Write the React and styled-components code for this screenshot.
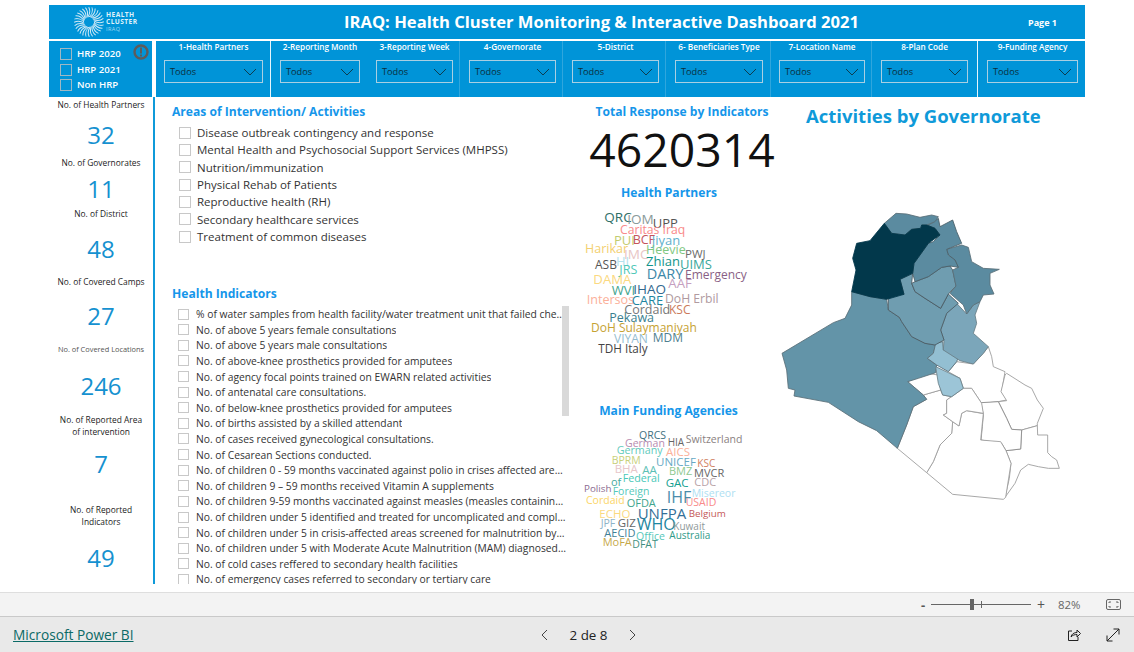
import React from "react";
import styled, { createGlobalStyle } from "styled-components";

const FONT = `"Open Sans", "Noto Sans", "Liberation Sans", sans-serif`;

const Global = createGlobalStyle`
  html, body { margin: 0; padding: 0; background: #fff; overflow: hidden; }
  body { font-family: ${FONT}; }
`;

const Page = styled.div`
  width: 1134px; height: 652px; display: flex; flex-direction: column; overflow: hidden; background: #fff;
`;
const Report = styled.main`
  height: 592px; box-sizing: border-box; padding: 5px 49px 0; display: flex; flex-direction: column; overflow: hidden;
`;
const Header = styled.header`
  height: 34px; flex: none; background: #0094d8; display: flex; align-items: center; position: relative; color: #fff;
`;
const LogoWrap = styled.div`
  width: 295px; flex: none; display: flex; align-items: center; padding-left: 25px; box-sizing: border-box; gap: 2px;
`;
const LogoText = styled.div`
  font-size: 6.6px; line-height: 7.4px; font-weight: 700; letter-spacing: .45px; color: #dff1fa;
  small { display: block; font-size: 5.5px; font-weight: 400; opacity: .7; }
`;
const Title = styled.h1`
  margin: 0; width: 513px; flex: none; font-size: 16.6px; line-height: 34px; font-weight: 700; text-align: center; white-space: nowrap;
`;
const PageTag = styled.div`
  margin-left: 171px; font-size: 9px; font-weight: 700; white-space: nowrap;
`;
const FilterBar = styled.section`
  height: 56px; flex: none; margin-top: 2px; display: flex; color: #fff;
`;
const HrpPanel = styled.div`
  width: 103px; flex: none; background: #0094d8; position: relative; box-sizing: border-box; padding: 7px 0 0 11px;
  display: flex; flex-direction: column; gap: 3.6px; margin-right: 4px;
`;
const HrpRow = styled.label`
  display: flex; align-items: center; gap: 5px; font-size: 9.6px; font-weight: 600; height: 12px; line-height: 12px; white-space: nowrap;
`;
const HrpBox = styled.span`
  width: 10px; height: 10px; border: 1px solid #9fb8c4; display: block;
`;
const InfoBadge = styled.svg`
  position: absolute; top: 3px; right: 3px;
`;
const Filters = styled.div`
  flex: 1; display: flex; background: #0094d8;
`;
const Filter = styled.div`
  width: ${p => p.$w}px; flex: none; box-sizing: border-box; padding-left: ${p => p.$pad}px;
  border-right: ${p => p.$line === "strong" ? "1px solid #e6f5fc" : p.$line === "soft" ? "1px solid #2fa6dd" : "none"};
  display: flex; flex-direction: column; align-items: flex-start;
`;
const FilterLabel = styled.div`
  width: ${p => p.$dw}px; height: 12px; font-size: 8.2px; line-height: 12px; font-weight: 600; white-space: nowrap;
  display: flex; justify-content: center;
`;
const Select = styled.div`
  margin-top: 7px; width: ${p => p.$dw}px; height: 23px; box-sizing: border-box; border: 1px solid #a9cfe2;
  display: flex; align-items: center; justify-content: space-between; padding: 0 5px 0 5px; color: #0c2f3c; font-size: 9.2px;
`;
const Body = styled.div`
  flex: 1; min-height: 0; display: flex;
`;
const KpiColumn = styled.aside`
  width: 106px; flex: none; height: 487px; box-sizing: border-box; border-right: 2px solid #0f9ad9; display: flex; flex-direction: column; align-items: center;
`;
const KpiLabel = styled.div`
  flex: none; margin-top: ${p => p.$mt}px; width: 100%; text-align: center;
  font-size: ${p => p.$small ? 7.4 : 8.4}px; line-height: 12px; color: ${p => p.$small ? "#555" : "#222"}; white-space: pre-line;
`;
const KpiValue = styled.div`
  flex: none; margin-top: ${p => p.$mt}px; height: 30px; line-height: 30px; width: 100%; text-align: center;
  font-size: 24px; color: #1591d0;
`;
const ColLeft = styled.div`
  width: 415px; flex: none; height: 487px; overflow: hidden; box-sizing: border-box; padding-left: 17px;
`;
const Heading = styled.h2`
  margin: ${p => p.$mt || 0}px 0 0; font-size: 12.1px; line-height: 16px; font-weight: 700; color: #1596ea; white-space: nowrap;
`;
const ActivityList = styled.ul`
  list-style: none; margin: 4px 0 0; padding: 0 0 0 7px;
`;
const ActivityRow = styled.li`
  height: 17.33px; display: flex; align-items: center; gap: 6px; font-size: 11.5px; color: #333; white-space: nowrap;
`;
const Box = styled.span`
  flex: none; width: ${p => p.$s}px; height: ${p => p.$s}px; border: 1px solid #c8c8c8; display: block;
`;
const IndicatorWrap = styled.div`
  position: relative; margin-top: 4px; height: 278px; overflow: hidden; width: 397px;
`;
const IndicatorScroll = styled.div`
  position: absolute; top: 0; right: 0; width: 7px; height: 110px; background: #d9d9d9;
`;
const IndicatorList = styled.ul`
  list-style: none; margin: 0; padding: 0 0 0 6px;
`;
const IndicatorRow = styled.li`
  height: 15.62px; display: flex; align-items: center; gap: 7px; font-size: 10.3px; color: #333; width: 388px; white-space: nowrap;
  span:last-child { overflow: hidden; text-overflow: ellipsis; }
`;
const ColMid = styled.div`
  width: 210px; flex: none; display: flex; flex-direction: column;
`;
const CenterHead = styled(Heading)`
  text-align: center; width: ${p => p.$w}px;
`;
const BigNumber = styled.div`
  width: 224px; text-align: center; font-size: 46.3px; line-height: 60px; color: #111;
`;
const Cloud = styled.div`
  position: relative; width: 210px; height: ${p => p.$h}px;
`;
const Word = styled.span`
  position: absolute; left: ${p => p.$x}px; top: ${p => p.$y}px; transform: translateY(-50%);
  font-size: ${p => p.$s}px; line-height: 1; color: ${p => p.$c}; white-space: nowrap;
`;
const ColMap = styled.div`
  flex: 1; display: flex; flex-direction: column;
`;
const MapTitle = styled.h2`
  margin: 7px 0 0 26px; font-size: 18.5px; line-height: 24px; font-weight: 700; color: #0f9ad9; white-space: nowrap;
`;
const MapSvg = styled.svg`
  margin: 62px 0 0 -10px; flex: none;
`;
const ViewBar = styled.div`
  height: 23px; flex: none; background: #f3f3f3; border-top: 1px solid #dedede; border-bottom: 1px solid #c9c9c9;
  display: flex; align-items: center; color: #666; position: relative;
`;
const ZoomMinus = styled.span`
  margin-left: 921px; font-size: 13px; font-weight: 700; width: 10px; color: #555;
`;
const ZoomTrack = styled.div`
  width: 100px; height: 1px; background: #666; position: relative;
`;
const ZoomThumb = styled.span`
  position: absolute; left: 39px; top: -5px; width: 4px; height: 11px; background: #666;
`;
const ZoomTick = styled.span`
  position: absolute; left: 50px; top: -3px; width: 1px; height: 7px; background: #666;
`;
const ZoomPlus = styled.span`
  width: 20px; margin-right: 7px; font-size: 14px; text-align: center; color: #555;
`;
const ZoomPct = styled.span`
  font-size: 11.4px; width: 48px; color: #666;
`;
const BottomBar = styled.footer`
  flex: 1; background: #e9e9e9; display: flex; align-items: center; position: relative; padding: 0 14px 0 13px;
`;
const BiLink = styled.a`
  font-size: 13.7px; color: #0b6a66; text-decoration: underline; width: 527px; flex: none;
`;
const Pager = styled.div`
  display: flex; align-items: center; color: #222; font-size: 13.4px; width: 97px; justify-content: space-between; flex: none;
`;
const Actions = styled.div`
  margin-left: auto; display: flex; gap: 25px; align-items: center; color: #222;
`;

function Logo() {
  const rays = Array.from({ length: 28 }, (_, i) => (i * 360) / 28);
  return (
    <svg width="30" height="30" viewBox="-15 -15 30 30">
      {rays.map(a => (
        <path key={a} d="M0 -5 C3 -8 4 -11 3 -14.5" fill="none" stroke="#cfe9f6" strokeWidth="1" transform={`rotate(${a})`} />
      ))}
    </svg>
  );
}

function Chevron() {
  return (
    <svg width="14" height="8" viewBox="0 0 14 8"><path d="M1 1l6 6 6-6" fill="none" stroke="#0c3d50" strokeWidth="1" /></svg>
  );
}

const filters = [
  { t: "1-Health Partners", w: 115, pad: 8, dw: 99, line: "strong" },
  { t: "2-Reporting Month", w: 99, pad: 9, dw: 80 },
  { t: "3-Reporting Week", w: 90, pad: 6, dw: 77, line: "soft" },
  { t: "4-Governorate", w: 103, pad: 9, dw: 87, line: "soft" },
  { t: "5-District", w: 103, pad: 9, dw: 87, line: "soft" },
  { t: "6- Beneficiaries Type", w: 105, pad: 9, dw: 88, line: "soft" },
  { t: "7-Location Name", w: 101, pad: 8, dw: 86, line: "soft" },
  { t: "8-Plan Code", w: 106, pad: 9, dw: 87, line: "strong" },
  { t: "9-Funding Agency", w: 107, pad: 9, dw: 91 },
];

const activities = [
  "Disease outbreak contingency and response",
  "Mental Health and Psychosocial Support Services (MHPSS)",
  "Nutrition/immunization",
  "Physical Rehab of Patients",
  "Reproductive health (RH)",
  "Secondary healthcare services",
  "Treatment of common diseases",
];

const indicators = [
  "% of water samples from health facility/water treatment unit that failed chemical and bacteriological tests",
  "No. of above 5 years female consultations",
  "No. of above 5 years male consultations",
  "No. of above-knee prosthetics provided for amputees",
  "No. of agency focal points trained on EWARN related activities",
  "No. of antenatal care consultations.",
  "No. of below-knee prosthetics provided for amputees",
  "No. of births assisted by a skilled attendant",
  "No. of cases received gynecological consultations.",
  "No. of Cesarean Sections conducted.",
  "No. of children 0 - 59 months vaccinated against polio in crises affected areas and camps",
  "No. of children 9 – 59 months received Vitamin A supplements",
  "No. of children 9-59 months vaccinated against measles (measles containing vaccine) in crises",
  "No. of children under 5 identified and treated for uncomplicated and complicated malnutrition",
  "No. of children under 5 in crisis-affected areas screened for malnutrition by health workers",
  "No. of children under 5 with Moderate Acute Malnutrition (MAM) diagnosed and treated in centres",
  "No. of cold cases reffered to secondary health facilities",
  "No. of emergency cases referred to secondary or tertiary care",
];

const kpis = [
  ["label", "No. of Health Partners", 2],
  ["value", "32", 9],
  ["label", "No. of Governorates", 7],
  ["value", "11", 5],
  ["label", "No. of District", 4],
  ["value", "48", 14],
  ["label", "No. of Covered Camps", 12],
  ["value", "27", 13],
  ["small", "No. of Covered Locations", 12],
  ["value", "246", 16],
  ["label", "No. of Reported Area\nof intervention", 13],
  ["value", "7", 11],
  ["label", "No. of Reported\nIndicators", 25],
  ["value", "49", 15],
];

const partners = [
  ["QRC",103,110,13.5,"#2f6f68"],["IOM",172,118,13.5,"#8a9a9a"],["UPP",248,125,13,"#555"],["Caritas Iraq",150,148,12.2,"#f98a8a"],
  ["PUI",132,176,13,"#c2cc6f"],["BCF",188,176,12.5,"#c4545a"],["Jiyan",245,176,13,"#5fb0cc"],["Harikar",45,203,12.5,"#f3d070"],
  ["IMC",162,222,13.5,"#e8c5c5"],["Heevie",228,207,12.5,"#7fc781"],["PWJ",345,218,11.5,"#6b6b6b"],["HI",138,240,13,"#b5e2ee"],
  ["Zhian",228,241,13,"#12958a"],["UIMS",330,250,13,"#3aa79c"],["ASB",75,253,12,"#555"],["JRS",148,268,12.5,"#4fc8b8"],
  ["DARY",230,279,14.5,"#3c88a8"],["Emergency",345,282,12,"#8a5f85"],["DAMA",70,298,13.2,"#fbd97f"],["AAF",295,310,13.2,"#c59fc0"],
  ["WVI",125,328,13,"#3fa58e"],["IHAO",190,326,13.5,"#33698f"],["Intersos",50,356,12.6,"#fbb09a"],["CARE",185,357,13,"#1f86a0"],
  ["DoH Erbil",285,355,12.2,"#b09aa0"],["Cordaid",163,388,12.5,"#777"],["KSC",297,388,12,"#cb7a5a"],["Pekawa",118,412,12.5,"#3b7f90"],
  ["DoH Sulaymaniyah",63,440,12,"#c6a233"],["VIYAN",132,474,12,"#94bcd0"],["MDM",248,470,12,"#4f7f8f"],["TDH Italy",85,505,11.7,"#444"],
];

const funders = [
  ["QRCS",207,102,10.5,"#3f6f80"],["German",165,127,10.5,"#b88cb0"],["HIA",293,122,10,"#666"],["Switzerland",347,115,10.5,"#8a7f7f"],
  ["Germany",140,148,10.7,"#5fcabb"],["AICS",288,152,11.5,"#fbb09a"],["BPRM",125,176,10.5,"#c7d07a"],["UNICEF",258,182,11.5,"#68a9c4"],
  ["KSC",382,186,10,"#d08060"],["BHA",134,203,11.5,"#e7c6c9"],["AA",217,208,11.5,"#5cc0b5"],["BMZ",297,208,11,"#8fc98f"],
  ["MVCR",372,212,11,"#666"],["of",123,241,11,"#48a99e"],["Federal",158,231,10.7,"#48c8b8"],["GAC",287,247,11.5,"#14a090"],
  ["CDC",373,239,11,"#b8a3a8"],["Polish",42,265,9.8,"#8a6a8f"],["Foreign",128,271,10.5,"#55c8ba"],["IHF",290,287,16,"#4a8caa"],
  ["Misereor",365,276,10.5,"#aee0f2"],["Cordaid",48,297,10.5,"#fbd566"],["OFDA",170,304,11,"#3fa58e"],["USAID",347,304,10.5,"#f98a8a"],
  ["UNFPA",203,337,15,"#336f97"],["ECHO",88,338,11.5,"#fbd97f"],["Belgium",356,340,9.8,"#c45858"],["JPF",92,366,10.5,"#8fb4c8"],
  ["GIZ",143,366,11.5,"#666"],["WHO",200,370,16,"#1f86a0"],["Kuwait",310,375,10,"#8f9a9a"],["AECID",103,392,11,"#3f7f98"],
  ["Australia",298,403,10,"#2f9a88"],["Office",198,404,10.5,"#55c8ba"],["MoFA",98,420,11,"#c6a84a"],["DFAT",187,430,10.5,"#3f9080"],
];

// map outline coordinates: traced at 3x, viewBox is 870 x 960
const z6 = (...n) => { const o = []; for (let i = 0; i < n.length; i += 2) o.push(`${n[i]},${n[i + 1]}`); return o; };
const z7 = (...n) => { const o = []; for (let i = 0; i < n.length; i += 2) o.push(`${n[i]},${n[i + 1] + 540}`); return o; };
const z11 = (...n) => { const o = []; for (let i = 0; i < n.length; i += 2) o.push(`${n[i] + 540},${n[i + 1] + 510}`); return o; };

const regions = [
  { f: "#ffffff", s: "#9a9a9a", p: z6(535,545,560,515,610,522,640,490,655,470,665,500,670,530,705,545,695,605,710,630,685,635,635,640,605,595,580,595,570,565) },
  { f: "#ffffff", s: "#9a9a9a", p: z11(170,40,225,75,245,85,262,120,280,145,262,190,262,197,215,210,185,208,170,175,145,125,170,122,153,95,165,45) },
  { f: "#ffffff", s: "#9a9a9a", p: z11(215,210,262,197,263,225,293,225,293,278,305,290,320,300,328,325,295,325,265,320,235,313,212,330,195,370,165,412,178,355,183,310,168,272,212,267) },
  { f: "#ffffff", s: "#888", p: z11(93,128,145,125,170,175,185,208,215,210,212,267,168,272,155,250,93,240,97,200,100,165) },
  { f: "#ffffff", s: "#9a9a9a", p: z7(470,308,490,275,510,225,545,190,548,155,567,168,575,130,590,122,635,130,640,130,632,210,692,215,708,242,723,280,707,382,700,388,548,373) },
  { f: "#ffffff", s: "#9a9a9a", p: z7(382,235,410,165,430,110,470,88,460,75,512,60,518,75,545,80,530,90,530,130,520,135,548,155,545,190,510,225,490,275,470,308) },
  { f: "#ffffff", s: "#9a9a9a", p: z7(545,80,580,55,605,55,635,100,640,130,590,122,575,130,567,168,548,155,520,135,530,130,530,90) },
  { f: "#ffffff", s: "#9a9a9a", p: z7(413,35,470,10,505,15,512,60,460,75) },
  { f: "#6394a8", s: "#5a6f78", p: [...z6(245,305,300,320,350,328,355,360,388,382,395,395,425,440,465,460,497,465,490,490,472,505,500,525,497,548,445,565), ...z7(413,35,460,75,470,88,430,110,410,165,382,235,320,182,265,155,175,97,72,78,75,60,55,55,50,0), ...z6(36,490,190,398,225,385,245,345)] },
  { f: "#9cc5d7", s: "#6a7f88", p: [...z6(497,530,535,548,570,565,580,595), ...z7(545,80,518,75,505,40)] },
  { f: "#93bfd2", s: "#5a6f78", p: z6(497,460,518,455,520,480,570,488,560,515,535,545,500,525,472,505,490,490) },
  { f: "#7ba6ba", s: "#6a7f88", p: z6(560,340,590,372,610,345,630,335,615,375,620,400,610,430,655,470,640,490,610,522,570,512,520,480,522,450,512,420,530,370) },
  { f: "#6f9db0", s: "#4a5a62", p: z6(390,268,428,250,425,280,435,305,465,325,512,355,535,312,565,340,530,370,512,420,522,450,495,465,465,460,425,440,395,395,388,382,355,360,355,315,402,313) },
  { f: "#6f9db0", s: "#4a5a62", p: z6(425,280,435,275,475,260,515,232,540,228,548,240,558,288,535,312,512,355,465,325,435,305) },
  { f: "#5b8ba0", s: "#5a6f78", p: z6(530,178,575,165,595,172,605,215,640,235,688,238,660,250,660,285,672,312,640,315,630,335,610,345,590,372,580,345,540,310,558,288,548,240,565,232,555,210,535,195) },
  { f: "#5b8ba0", s: "#4a5f68", p: z6(510,135,490,155,475,160,432,220,428,250,435,275,475,260,515,232,540,228,565,232,555,210,535,195,530,178,575,160,560,125,548,90,510,110,505,85,485,100,470,105,495,115) },
  { f: "#5b8ba0", s: "#5a6f78", p: z6(343,100,378,70,410,72,450,82,485,75,505,80,495,95,470,105,455,105,452,115,425,118,405,135,365,130) },
  { f: "#02384b", s: "#02384b", p: z6(343,100,300,152,260,160,248,205,258,240,245,305,300,320,350,328,402,313,390,268,428,250,432,220,475,160,510,135,495,115,470,105,455,105,452,115,425,118,405,135,365,130) },
];

export default function App() {
  return (
    <Page>
      <Global />
      <Report>
        <Header>
          <LogoWrap>
            <Logo />
            <LogoText>HEALTH<br />CLUSTER<small>IRAQ</small></LogoText>
          </LogoWrap>
          <Title>IRAQ: Health Cluster Monitoring &amp; Interactive Dashboard 2021</Title>
          <PageTag>Page 1</PageTag>
        </Header>
        <FilterBar>
          <HrpPanel>
            {["HRP 2020", "HRP 2021", "Non HRP"].map(t => (
              <HrpRow key={t}><HrpBox />{t}</HrpRow>
            ))}
            <InfoBadge width="16" height="16" viewBox="0 0 16 16">
              <circle cx="8" cy="8" r="6.5" fill="none" stroke="#5c5c5c" strokeWidth="2.4" />
              <rect x="7" y="3.5" width="2" height="6" fill="#5c5c5c" />
              <rect x="7" y="10.5" width="2" height="2" fill="#5c5c5c" />
            </InfoBadge>
          </HrpPanel>
          <Filters>
            {filters.map(f => (
              <Filter key={f.t} $w={f.w} $pad={f.pad} $line={f.line}>
                <FilterLabel $dw={f.dw}>{f.t}</FilterLabel>
                <Select $dw={f.dw}>Todos<Chevron /></Select>
              </Filter>
            ))}
          </Filters>
        </FilterBar>
        <Body>
          <KpiColumn>
            {kpis.map(([k, t, mt]) =>
              k === "value"
                ? <KpiValue key={t} $mt={mt}>{t}</KpiValue>
                : <KpiLabel key={t} $mt={mt} $small={k === "small"}>{t}</KpiLabel>
            )}
          </KpiColumn>
          <ColLeft>
            <Heading $mt={7}>Areas of Intervention/ Activities</Heading>
            <ActivityList>
              {activities.map(a => <ActivityRow key={a}><Box $s={10} />{a}</ActivityRow>)}
            </ActivityList>
            <Heading $mt={41}>Health Indicators</Heading>
            <IndicatorWrap>
              <IndicatorList>
                {indicators.map(t => <IndicatorRow key={t}><Box $s={9} /><span>{t}</span></IndicatorRow>)}
              </IndicatorList>
              <IndicatorScroll />
            </IndicatorWrap>
          </ColLeft>
          <ColMid>
            <CenterHead $w={224} $mt={7}>Total Response by Indicators</CenterHead>
            <BigNumber>4620314</BigNumber>
            <CenterHead $w={198} $mt={5}>Health Partners</CenterHead>
            <Cloud $h={202}>
              {partners.map(([t, x, y, s, c]) => <Word key={t} $x={x / 3} $y={y / 3 - 20} $s={s} $c={c}>{t}</Word>)}
            </Cloud>
            <CenterHead $w={197}>Main Funding Agencies</CenterHead>
            <Cloud $h={150}>
              {funders.map(([t, x, y, s, c]) => <Word key={t} $x={x / 3} $y={y / 3 - 18} $s={s} $c={c}>{t}</Word>)}
            </Cloud>
          </ColMid>
          <ColMap>
            <MapTitle>Activities by Governorate</MapTitle>
            <MapSvg width="290" height="320" viewBox="0 0 870 960">
              {regions.map((r, i) => (
                <polygon key={i} points={r.p.join(" ")} fill={r.f} stroke={r.s} strokeWidth="2.6" strokeLinejoin="round" />
              ))}
            </MapSvg>
          </ColMap>
        </Body>
      </Report>
      <ViewBar>
        <ZoomMinus>-</ZoomMinus>
        <ZoomTrack><ZoomThumb /><ZoomTick /></ZoomTrack>
        <ZoomPlus>+</ZoomPlus>
        <ZoomPct>82%</ZoomPct>
        <svg width="15" height="11" viewBox="0 0 15 11">
          <rect x=".5" y=".5" width="14" height="10" rx="1.5" fill="none" stroke="#666" />
          <path d="M3 4V3h2M10 3h2v1M12 7v1h-2M5 8H3V7" fill="none" stroke="#666" />
        </svg>
      </ViewBar>
      <BottomBar>
        <BiLink>Microsoft Power BI</BiLink>
        <Pager>
          <svg width="9" height="12" viewBox="0 0 9 12"><path d="M7 1L2 6l5 5" fill="none" stroke="#444" /></svg>
          <span>2 de 8</span>
          <svg width="9" height="12" viewBox="0 0 9 12"><path d="M2 1l5 5-5 5" fill="none" stroke="#444" /></svg>
        </Pager>
        <Actions>
          <svg width="14" height="14" viewBox="0 0 14 14">
            <path d="M5 3H1.5v9.5h9.5V9" fill="none" stroke="#222" />
            <path d="M4 9c.5-3 3-4.5 6-4.5V2l3.5 3.5L10 9V6.5C8 6.5 5.5 7 4 9z" fill="none" stroke="#222" />
          </svg>
          <svg width="14" height="14" viewBox="0 0 14 14">
            <path d="M1 13L13 1M7.5 1H13v5.5M1 7.5V13h5.5" fill="none" stroke="#222" />
          </svg>
        </Actions>
      </BottomBar>
    </Page>
  );
}
